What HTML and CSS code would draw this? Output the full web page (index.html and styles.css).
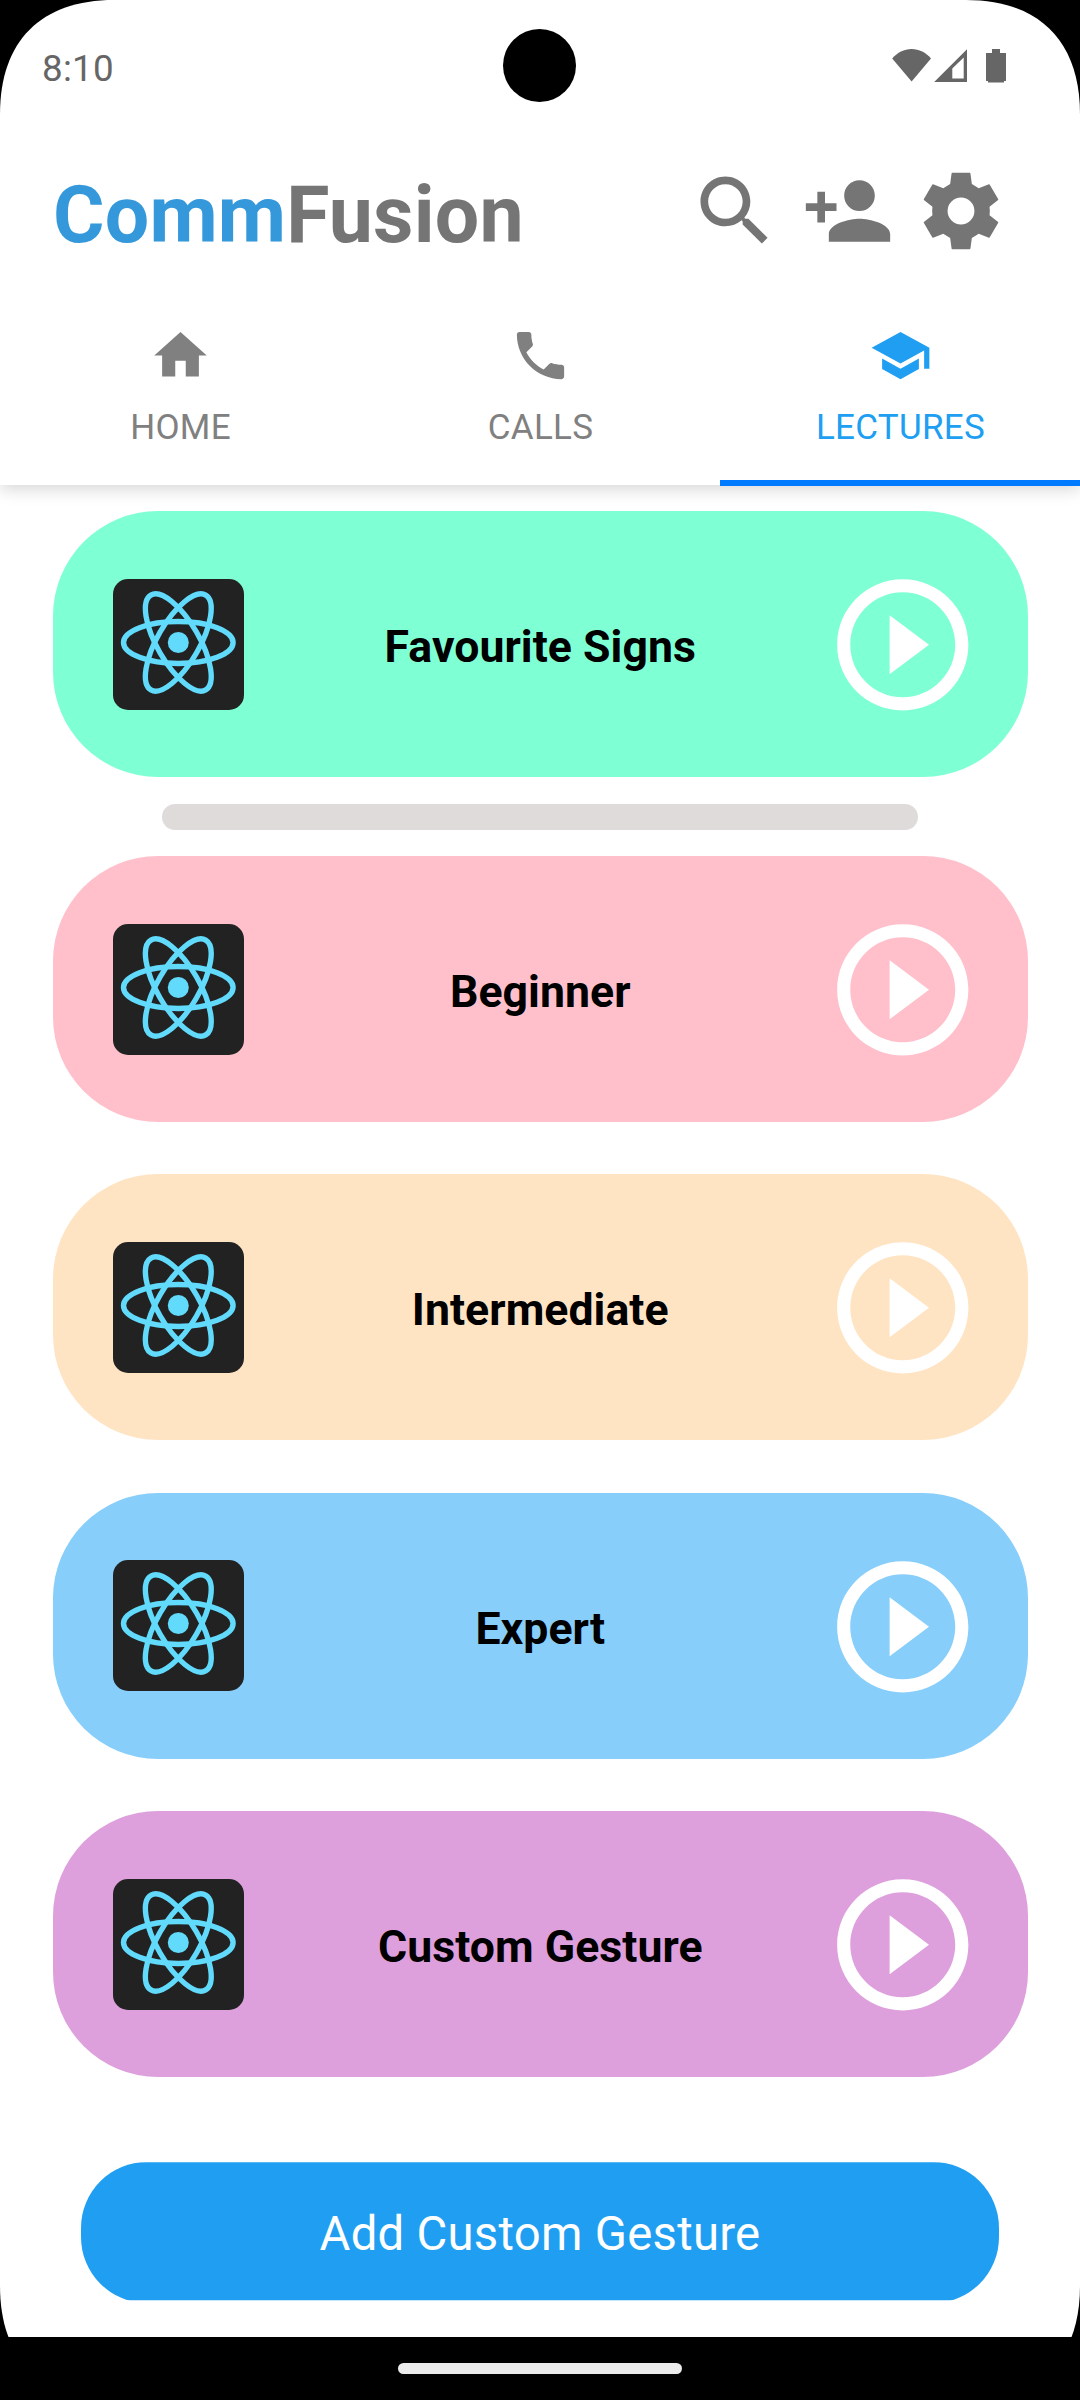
FILE: index.html
```html
<!DOCTYPE html>
<html lang="en">
<head>
<meta charset="utf-8">
<title>CommFusion</title>
<link rel="stylesheet" href="styles.css">
</head>
<body>
<svg class="defs" width="0" height="0" aria-hidden="true">
  <symbol id="atom" viewBox="0 0 131 131">
    <rect width="131" height="131" rx="15" fill="#222"/>
    <g fill="none" stroke="#61dafb" stroke-width="5.4">
      <ellipse cx="65.3" cy="63.5" rx="54.8" ry="21"/>
      <ellipse cx="65.3" cy="63.5" rx="54.8" ry="21" transform="rotate(60 65.3 63.5)"/>
      <ellipse cx="65.3" cy="63.5" rx="54.8" ry="21" transform="rotate(120 65.3 63.5)"/>
    </g>
    <circle cx="65.3" cy="63.5" r="10.5" fill="#61dafb"/>
  </symbol>
  <symbol id="play" viewBox="0 0 24 24">
    <path d="M10 16.5l6-4.5-6-4.5v9zM12 2C6.48 2 2 6.48 2 12s4.48 10 10 10 10-4.48 10-10S17.52 2 12 2zm0 18c-4.41 0-8-3.59-8-8s3.59-8 8-8 8 3.59 8 8-3.59 8-8 8z"/>
  </symbol>
</svg>
<div class="screen">
  <div class="status">
    <span class="clock">8:10</span>
    <svg class="status-icons" width="116" height="36" viewBox="0 0 116 36">
      <path d="M0.2 10.500C5.5 4.500 12 1 19.6 1s14.1 3.500 19.4 9.500L19.6 33.6z"/>
      <path fill-rule="evenodd" d="M42.2 34L75 1.3V34zM60.3 30.5H71.7V9.5L60.3 20.5z"/>
      <path d="M100 1h8v4h6v28h-2v1.5h-16v-1.5h-2V5h6z"/>
    </svg>
    <span class="camera"></span>
  </div>
  <header class="header">
    <h1 class="brand"><span class="brand-comm">Comm</span>Fusion</h1>
    <div class="actions">
      <svg class="action" viewBox="0 0 24 24"><path d="M15.5 14h-.79l-.28-.27C15.41 12.59 16 11.11 16 9.5 16 5.91 13.09 3 9.5 3S3 5.91 3 9.5 5.91 16 9.5 16c1.61 0 3.09-.59 4.23-1.57l.27.28v.79l5 4.99L20.49 19l-4.99-5zm-6 0C7.01 14 5 11.99 5 9.5S7.01 5 9.5 5 14 7.01 14 9.5 11.99 14 9.5 14z"/></svg>
      <svg class="action" viewBox="0 0 24 24"><path d="M15 12c2.21 0 4-1.79 4-4s-1.79-4-4-4-4 1.79-4 4 1.79 4 4 4zm-9-2V7H4v3H1v2h3v3h2v-3h3v-2H6zm9 4c-2.67 0-8 1.34-8 4v2h16v-2c0-2.66-5.33-4-8-4z"/></svg>
      <svg class="action" viewBox="0 0 24 24"><path d="M9.7 2h4.6l.15.13.38 2.83 1.79 1.1 2.65-1.05.2.08 2.25 3.85-.04.2L19.45 10.9a8 8 0 0 1 0 2.2l2.23 1.76.04.2-2.25 3.85-.2.08-2.65-1.05-1.79 1.1-.38 2.83-.15.13H9.7l-.15-.13-.38-2.83-1.79-1.1-2.65 1.05-.2-.08-2.25-3.85.04-.2L4.55 13.1a8 8 0 0 1 0-2.2L2.32 9.14l-.04-.2 2.25-3.85.2-.08 2.65 1.05 1.79-1.1.38-2.83zM12 15.5a3.5 3.5 0 1 0 0-7 3.5 3.5 0 0 0 0 7z"/></svg>
    </div>
  </header>
  <nav class="tabs">
    <div class="tab">
      <svg class="tab-icon" viewBox="0 0 24 24"><path d="M10 20v-6h4v6h5v-8h3L12 3 2 12h3v8z"/></svg>
      <span>HOME</span>
    </div>
    <div class="tab">
      <svg class="tab-icon" viewBox="0 0 24 24"><path d="M6.62 10.79c1.44 2.83 3.76 5.14 6.59 6.59l2.2-2.2c.27-.27.67-.36 1.02-.24 1.12.37 2.33.57 3.57.57.55 0 1 .45 1 1V20c0 .55-.45 1-1 1-9.39 0-17-7.61-17-17 0-.55.45-1 1-1h3.5c.55 0 1 .45 1 1 0 1.25.2 2.45.57 3.57.11.35.03.74-.25 1.02l-2.2 2.2z"/></svg>
      <span>CALLS</span>
    </div>
    <div class="tab tab-active">
      <svg class="tab-icon" viewBox="0 0 24 24"><path d="M5 13.18v4L12 21l7-3.82v-4L12 17l-7-3.82zM12 3L1 9l11 6 9-4.91V17h2V9L12 3z"/></svg>
      <span>LECTURES</span>
    </div>
  </nav>
  <main class="content">
    <section class="card favourite"><svg class="logo"><use href="#atom"/></svg><h2>Favourite Signs</h2><svg class="play"><use href="#play"/></svg></section>
    <div class="divider"></div>
    <div class="levels">
      <section class="card beginner"><svg class="logo"><use href="#atom"/></svg><h2>Beginner</h2><svg class="play"><use href="#play"/></svg></section>
      <section class="card intermediate"><svg class="logo"><use href="#atom"/></svg><h2>Intermediate</h2><svg class="play"><use href="#play"/></svg></section>
      <section class="card expert"><svg class="logo"><use href="#atom"/></svg><h2>Expert</h2><svg class="play"><use href="#play"/></svg></section>
      <section class="card custom"><svg class="logo"><use href="#atom"/></svg><h2>Custom Gesture</h2><svg class="play"><use href="#play"/></svg></section>
    </div>
    <button class="add">Add Custom Gesture</button>
  </main>
  <footer class="navbar"><span class="handle"></span></footer>
</div>
</body>
</html>
```
FILE: styles.css
```css
* { box-sizing: border-box; margin: 0; padding: 0; }
body { background: #000; font-family: Roboto, "Liberation Sans", sans-serif; }
svg { display: block; flex: none; }
.defs { position: absolute; }
/* The display's corners are continuous curves, slightly fuller than circular arcs. */
.screen {
  width: 1080px; height: 2400px; background: linear-gradient(#fff 2337px, #000 2337px);
  clip-path: path("M0 114C0 41 41 0 114 0H966C1039 0 1080 41 1080 114V2286C1080 2359 1039 2400 966 2400H114C41 2400 0 2359 0 2286Z");
  display: flex; flex-direction: column;
}
.status {
  position: relative; height: 136px; padding: 0 72px 0 42px;
  display: flex; justify-content: space-between; align-items: flex-start;
}
.clock { margin-top: 47px; font-size: 36.75px; line-height: 43px; letter-spacing: .25px; color: #666; }
.status-icons { margin-top: 48px; fill: #666; }
.camera {
  position: absolute; left: 503px; top: 29px; width: 73px; height: 73px;
  border-radius: 50%; background: #000;
}
.header {
  height: 152px; padding: 0 73px 0 53px;
  display: flex; justify-content: space-between; align-items: center;
}
.brand { font-size: 78.75px; line-height: 92px; font-weight: 700; letter-spacing: .2px; padding-top: 5px; color: #757575; }
.brand-comm { color: #3498db; }
.actions { display: flex; gap: 21px; margin-top: -2px; }
.action { width: 92px; height: 92px; fill: #757575; }
.tabs {
  position: relative; height: 197px; flex: none; display: grid; grid-template-columns: repeat(3, 1fr);
  background: #fff; box-shadow: 0 4px 16px rgba(0, 0, 0, .17); clip-path: inset(0 0 -30px 0);
}
.tab {
  display: flex; flex-direction: column; align-items: center; padding-top: 36px;
  font-size: 35px; line-height: 42px; letter-spacing: .3px; color: gray; fill: gray;
}
.tab span { padding-left: 1px; }
.tab-icon { width: 63px; height: 63px; margin-bottom: 20px; }
.tab-active { color: #209ff2; fill: #209ff2; border-bottom: 6px solid #007aff; margin-bottom: -1px; }
.content { flex: 1; padding: 26px 52px 0 53px; display: flex; flex-direction: column; }
.card {
  height: 266px; border-radius: 105px; flex: none;
  display: grid; grid-template-columns: 131px 1fr 157.5px; align-items: center;
  padding: 0 46.5px 0 60px;
}
.card h2 {
  font-size: 44.6px; line-height: 52px; font-weight: 700; letter-spacing: .05px;
  text-align: center; padding: 6px 0 0 12.5px; color: #000;
}
.logo { width: 131px; height: 131px; }
.play { width: 157.5px; height: 157.5px; margin-top: 1px; fill: #fff; }
.favourite { background: #7fffd4; }
.beginner { background: #ffc0cb; }
.intermediate { background: #ffe4c4; }
.expert { background: #87cefa; }
.custom { background: #dda0dd; }
.divider { width: 756px; height: 26px; border-radius: 13px; background: #dfdbdb; margin: 27px 0 26px 109px; flex: none; }
.levels { display: flex; flex-direction: column; gap: 52.4px; }
.add {
  width: 918px; height: 141px; margin: 85px 0 0 28px; border: 0; border-radius: 66px;
  clip-path: inset(0 0 3px 0); padding-top: 3px;
  background: #209ff2; color: #fff; font: 400 47.25px/56px Roboto, "Liberation Sans", sans-serif; letter-spacing: .28px;
}
.navbar { height: 63px; flex: none; display: flex; justify-content: center; padding-top: 26px; }
.handle { width: 284px; height: 11px; border-radius: 6px; background: #ebebeb; }
```
